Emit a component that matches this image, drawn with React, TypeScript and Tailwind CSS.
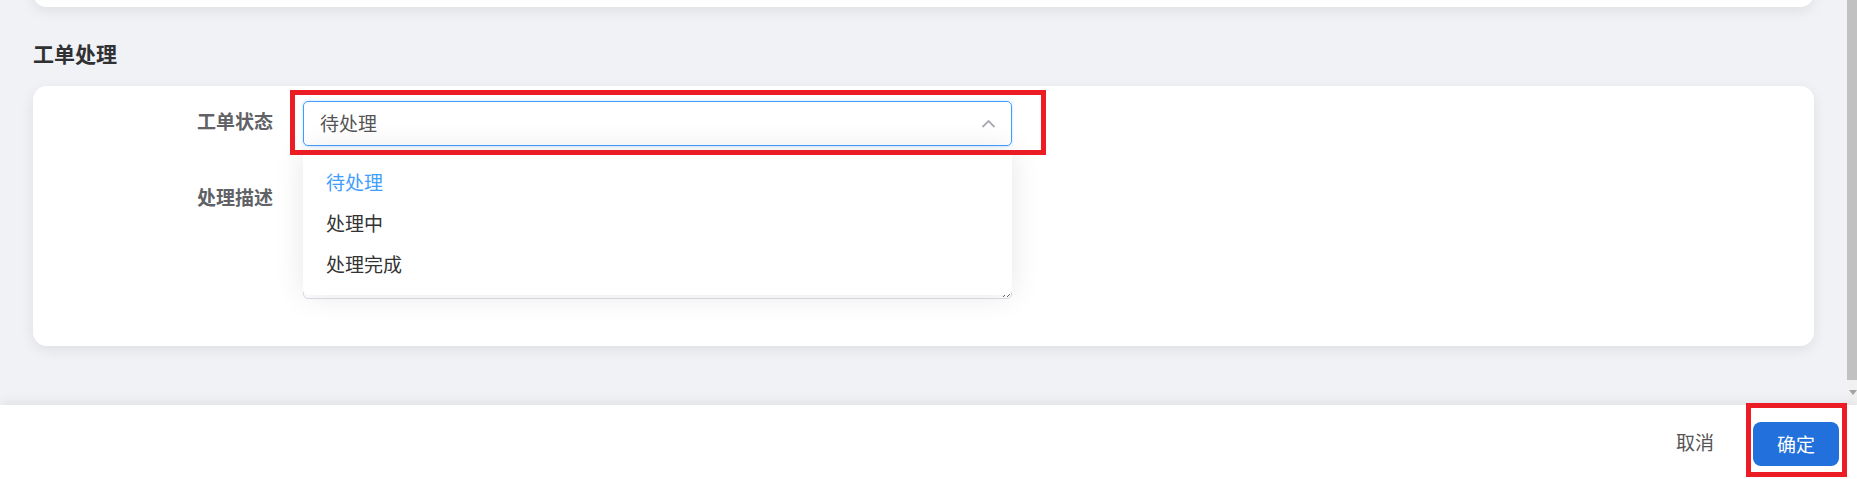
const options = ["待处理", "处理中", "处理完成"];

function Scrollbar() {
  return (
    <div className="flex w-[10px] flex-none flex-col bg-[#f1f1f1]">
      <div className="h-[380px] bg-[#c1c1c1]" />
      <div className="flex flex-1 justify-end pt-[10px]">
        <svg width="8" height="6" viewBox="0 0 8 6">
          <path d="M0 0 H8 L4 5 Z" fill="#a3a3a3" />
        </svg>
      </div>
    </div>
  );
}

export default function App() {
  const selected = "待处理";

  return (
    <div
      className="flex h-[479px] w-full flex-col overflow-hidden bg-[#f0f2f5]"
      style={{ fontFamily: '"Noto Sans CJK SC", "Liberation Sans", sans-serif' }}
    >
      {/* scrollable content */}
      <div className="flex h-[405px] flex-none">
        <div className="flex-1 overflow-hidden px-[33px]">
          {/* previous card, mostly scrolled out */}
          <div className="-mt-[20px] h-[27px] rounded-[14px] bg-white shadow-[0_4px_14px_rgba(0,0,0,0.08)]" />

          <h2 className="mt-[32px] mb-[19px] text-[21px] leading-[28px] font-bold text-[#303133]">
            工单处理
          </h2>

          <div className="rounded-[14px] bg-white pt-[15px] pb-[47px] shadow-[0_4px_14px_rgba(0,0,0,0.08)]">
            {/* 工单状态 */}
            <div className="flex">
              <label className="w-[270px] flex-none pr-[30px] text-right text-[19px] leading-[40px] font-bold text-[#606266]">
                工单状态
              </label>
              <div className="relative w-[709px] flex-none">
                <div className="flex h-[45px] items-center justify-between rounded-[5px] border border-[#409eff] pr-[15px] pl-[16px] shadow-[0_0_3px_rgba(64,158,255,0.35)]">
                  <span className="text-[19px] text-[#555]">{selected}</span>
                  <svg width="15" height="9" viewBox="0 0 15 9" fill="none">
                    <path d="M1.5 8 L7.5 2 L13.5 8" stroke="#a8abb2" strokeWidth="1.8" />
                  </svg>
                </div>

                {/* dropdown */}
                <div className="absolute top-[49px] left-0 z-10 w-full rounded-[5px] bg-white pt-[12px] pb-[10px] shadow-[0_0_30px_rgba(0,0,0,0.1)]">
                  {options.map((o) => (
                    <div
                      key={o}
                      className={
                        "flex h-[41px] items-center px-[23px] text-[19px] " +
                        (o === selected ? "text-[#409eff]" : "text-[#333]")
                      }
                    >
                      {o}
                    </div>
                  ))}
                </div>

                {/* annotation */}
                <div className="pointer-events-none absolute -top-[11px] -left-[13px] z-20 h-[65px] w-[756px] border-[5px] border-[#ec1c24]" />
              </div>
            </div>

            {/* 处理描述 */}
            <div className="mt-[28px] flex">
              <label className="w-[270px] flex-none pr-[30px] text-right text-[19px] leading-[45px] font-bold text-[#606266]">
                处理描述
              </label>
              <textarea
                readOnly
                className="h-[125px] w-[709px] flex-none resize-y rounded-[5px] border border-[#dcdfe6] bg-white px-[16px] py-[8px] text-[19px] text-[#606266] outline-none"
              />
            </div>
          </div>
        </div>
        <Scrollbar />
      </div>

      {/* footer */}
      <div className="relative z-10 flex flex-1 items-start justify-end gap-[19px] bg-white pt-[17px] pr-[18px] shadow-[0_-4px_10px_rgba(0,0,0,0.06)]">
        <button className="flex h-[44px] items-center px-[20px] pb-[4px] text-[19px] text-[#555]">
          取消
        </button>
        <div className="relative">
          <button className="h-[44px] w-[86px] rounded-[8px] bg-[#2170db] text-[19px] text-white">
            确定
          </button>
          <div className="pointer-events-none absolute -top-[19px] -left-[7px] h-[74px] w-[101px] border-[5px] border-[#ec1c24]" />
        </div>
      </div>
    </div>
  );
}
